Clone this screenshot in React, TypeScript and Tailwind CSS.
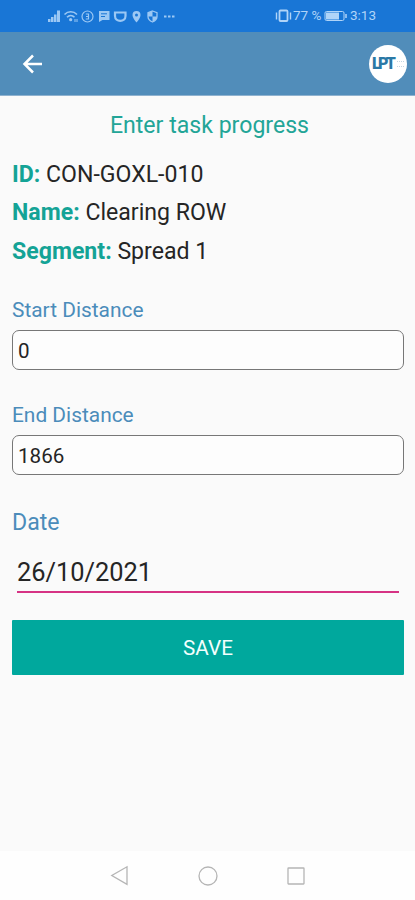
import { useState } from 'react';

function StatusIcons() {
  return (
    <svg width="130" height="16" viewBox="0 0 130 16" fill="none" className="text-[#9cc8f4]">
      {/* Signal bars */}
      <g fill="currentColor">
        <rect x="1" y="11" width="2.500" height="3" />
        <rect x="4" y="9" width="2.500" height="5" />
        <rect x="7" y="6.500" width="2.500" height="7.500" />
        <rect x="10" y="2.500" width="3" height="11.500" />
      </g>
      {/* Wifi */}
      <g stroke="currentColor" strokeWidth="1.600">
        <path d="M17.500 6.500c3.500-3.600 9-3.600 12.500 0" />
        <path d="M20 9.200c2.200-2.200 5.300-2.200 7.500 0" />
      </g>
      <circle cx="23.700" cy="11.700" r="1.600" fill="currentColor" />
      <path d="M28 11v3M30 11v3" stroke="currentColor" />
      {/* Data saver */}
      <circle cx="40.500" cy="8.500" r="5.500" stroke="currentColor" strokeWidth="1.200" />
      <path d="M38.800 6h2.700v5h-2.700M39 8.500h2.500" stroke="currentColor" strokeWidth="1.200" />
      {/* Note */}
      <path d="M52 3h10.500v9h-7L52 14z" fill="currentColor" />
      <path d="M54 5.800h6M54 8.500h4" stroke="#1976d6" />
      {/* Pocket */}
      <path d="M68 4.500h10.500v3.500c0 6.500-10.500 6.500-10.500 0z" stroke="currentColor" strokeWidth="2.200" />
      {/* Pin */}
      <path fill="currentColor" fillRule="evenodd" d="M89.500 3a4 4 0 0 0-4 4c0 3 4 7.500 4 7.500s4-4.500 4-7.500a4 4 0 0 0-4-4zm0 2.500a1.500 1.500 0 1 1 0 3 1.500 1.500 0 0 1 0-3z" />
      {/* Shield */}
      <path d="M105.500 3l4.500 1.700v3.800c0 2.500-2 4.500-4.500 5.500-2.500-1-4.500-3-4.500-5.500V4.700z" stroke="currentColor" strokeWidth="1.300" />
      <path d="M105.500 3v5.500h-4.500V4.700zM105.500 8.500h4.500c0 2.500-2 4.500-4.500 5.500z" fill="currentColor" />
      <path d="M117 8.500h2.500M121 8.500h2.500M125 8.500h2.500" stroke="currentColor" strokeWidth="1.800" />
    </svg>
  );
}

function StatusBar() {
  return (
    <div className="flex h-8 items-center justify-between bg-[#1976d6] pr-[39px] pl-[47px] text-[#b0d4f8]">
      <StatusIcons />
      <div className="flex items-center">
        <svg width="18" height="14" viewBox="0 0 18 14" fill="none" stroke="currentColor">
          <rect x="4.500" y="1.500" width="8" height="10.500" rx="1" strokeWidth="1.800" />
          <path d="M1.500 3.500v7M15.500 3.500v7" strokeWidth="1.400" />
        </svg>
        <span className="w-[31px] text-[13.500px] leading-none whitespace-nowrap">77 %</span>
        <svg width="24" height="12" viewBox="0 0 24 12" fill="none" stroke="currentColor">
          <rect x="1" y="1.500" width="19" height="9" rx="1.500" />
          <path d="M2 2.500h13v7H2z" fill="currentColor" stroke="none" />
          <path d="M22 4v4" strokeWidth="1.500" />
        </svg>
        <span className="ml-0.5 text-[13.500px] leading-none">3:13</span>
      </div>
    </div>
  );
}

function AppBar() {
  return (
    <header className="flex h-16 items-center justify-between border-b border-[#8fb2cf] bg-[#518dba] pr-2 pl-[22px]">
      <button type="button" aria-label="Back">
        <svg width="21" height="20" viewBox="0 0 21 20" fill="none" stroke="#fff" strokeWidth="2.500">
          <path d="M20 10H2.500M11 1.500L2.500 10l8.500 8.500" />
        </svg>
      </button>
      <div className="flex size-[38px] items-center rounded-full bg-white pl-[3px] text-[#2b79a6]">
        <span className="text-[16px] leading-none font-black tracking-[-2.700px]">LPT</span>
        <span className="ml-1 h-1.5 w-[7px] border-y border-dotted border-[#c3d5e1]" />
      </div>
    </header>
  );
}

function DetailRow({ label, value }: { label: string; value: string }) {
  return (
    <p className="h-[38.300px] text-[23.100px] leading-[38px] text-[#252525]">
      <span className="font-bold text-[#14a396]">{label}:</span> {value}
    </p>
  );
}

interface DistanceFieldProps {
  label: string;
  value: string;
  onChange: (value: string) => void;
}

function DistanceField({ label, value, onChange }: DistanceFieldProps) {
  return (
    <label className="block h-[105px]">
      <span className="block h-[35px] text-[20.900px] leading-[30px] text-[#4b8cba]">{label}</span>
      <input
        value={value}
        onChange={(e) => onChange(e.target.value)}
        className="block h-10 w-full rounded-[7px] border border-[#777] bg-[#fdfdfd] px-[5px] pt-px text-[20.600px] text-[#252525] outline-none"
      />
    </label>
  );
}

function NavBar() {
  return (
    <nav className="flex h-[49px] items-center justify-center gap-[69px] bg-[#fefefe]">
      <svg width="19" height="21" viewBox="0 0 19 21" fill="none" stroke="#b5b5b5" strokeWidth="1.300">
        <path d="M17 1.800v17.500L1.800 10.500z" />
      </svg>
      <svg width="20" height="20" viewBox="0 0 20 20" fill="none" stroke="#b5b5b5" strokeWidth="1.300">
        <circle cx="10" cy="10" r="9" />
      </svg>
      <svg width="18" height="18" viewBox="0 0 18 18" fill="none" stroke="#b5b5b5" strokeWidth="1.300">
        <rect x="1" y="1" width="16" height="16" rx="0.500" />
      </svg>
    </nav>
  );
}

export default function App() {
  const [start, setStart] = useState('0');
  const [end, setEnd] = useState('1866');
  const [date, setDate] = useState('26/10/2021');

  return (
    <div className="flex h-[900px] w-[415px] flex-col bg-[#fafafa] font-[Roboto,sans-serif]">
      <StatusBar />
      <AppBar />
      <main className="flex-1 pr-[11px] pl-3">
        <h1 className="pt-[15px] pl-[3px] text-center text-[23.100px] leading-[30px] text-[#22a597]">
          Enter task progress
        </h1>
        <div className="h-[130px] pt-[15px]">
          <DetailRow label="ID" value="CON-GOXL-010" />
          <DetailRow label="Name" value="Clearing ROW" />
          <DetailRow label="Segment" value="Spread 1" />
        </div>
        <div className="pt-6">
          <DistanceField label="Start Distance" value={start} onChange={setStart} />
          <DistanceField label="End Distance" value={end} onChange={setEnd} />
        </div>
        <label className="block">
          <span className="block pt-0.5 text-[23.100px] leading-[32px] text-[#4b8cba]">Date</span>
          <input
            value={date}
            onChange={(e) => setDate(e.target.value)}
            className="mx-[5px] mt-4 block h-[38px] w-[382px] border-b-2 border-[#d63384] pb-px text-[25.400px] text-[#252525] outline-none"
          />
        </label>
        <button type="button" className="mt-[26.500px] h-[55px] w-full rounded-[1px] bg-[#00a89d] pt-1 text-[20.700px] text-[#f2fffd]">
          SAVE
        </button>
      </main>
      <NavBar />
    </div>
  );
}
